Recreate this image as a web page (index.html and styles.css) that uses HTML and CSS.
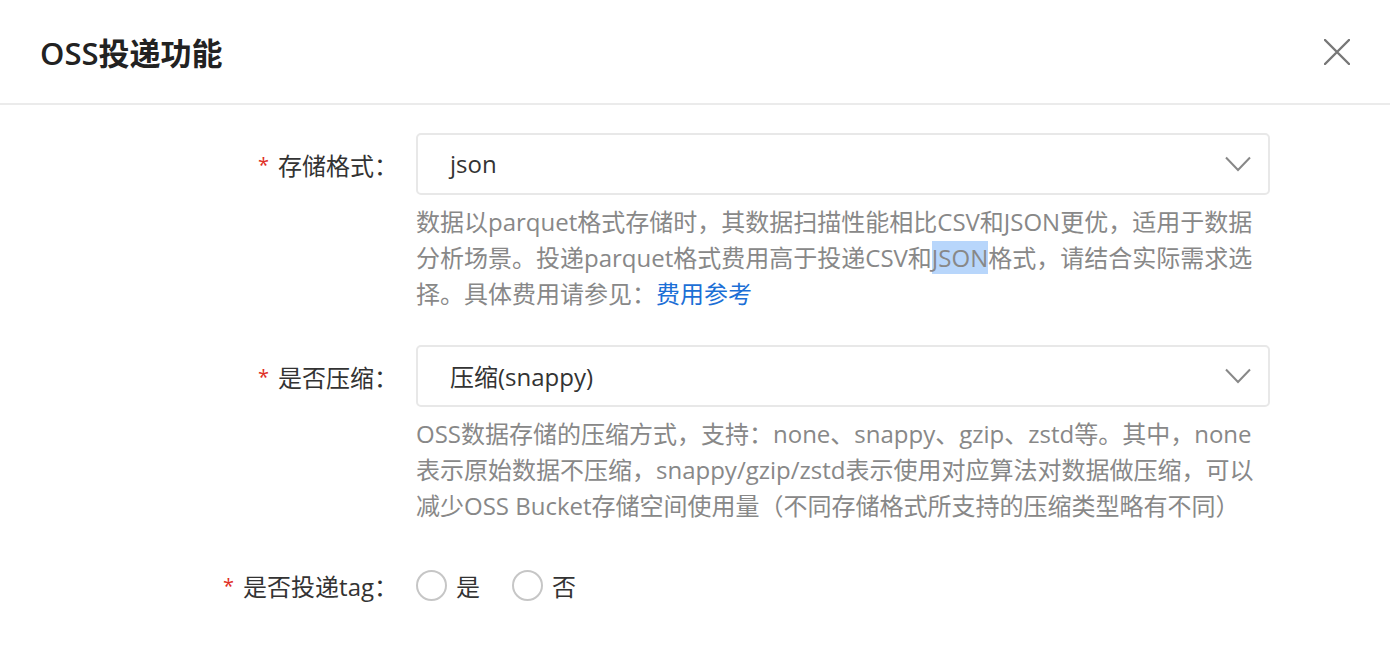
FILE: index.html
```html
<!DOCTYPE html>
<html lang="zh-CN">
<head>
  <meta charset="UTF-8" />
  <title>OSS投递功能</title>
  <link rel="stylesheet" href="styles.css">
</head>
<body>
  <div class="dialog">
    <header class="dialogHeader">
      <h1>OSS投递功能</h1>
      <button class="closeBtn" aria-label="关闭">
        <svg width="26" height="26" viewBox="0 0 26 26">
          <path d="M1 1 L25 25 M25 1 L1 25" stroke="#777" stroke-width="2.4" stroke-linecap="round" fill="none" />
        </svg>
      </button>
    </header>

    <form class="form">
      <div class="formItem">
        <label class="formLabel"><span class="required">*</span>存储格式：</label>
        <div class="formControl">
          <div class="select">
            <span class="selectValue">json</span>
            <svg class="chevron" width="26" height="16" viewBox="0 0 26 16">
              <path d="M1 1.5 L13 14 L25 1.5" stroke="#888" stroke-width="2" fill="none" />
            </svg>
          </div>
          <p class="help">数据以parquet格式存储时，其数据扫描性能相比CSV和JSON更优，适用于数据分析场景。投递parquet格式费用高于投递CSV和<span class="picked">JSON</span>格式，请结合实际需求选择。具体费用请参见：<a href="#">费用参考</a></p>
        </div>
      </div>

      <div class="formItem">
        <label class="formLabel"><span class="required">*</span>是否压缩：</label>
        <div class="formControl">
          <div class="select">
            <span class="selectValue">压缩(snappy)</span>
            <svg class="chevron" width="26" height="16" viewBox="0 0 26 16">
              <path d="M1 1.5 L13 14 L25 1.5" stroke="#888" stroke-width="2" fill="none" />
            </svg>
          </div>
          <p class="help">OSS数据存储的压缩方式，支持：none、snappy、gzip、zstd等。其中，none表示原始数据不压缩，snappy/gzip/zstd表示使用对应算法对数据做压缩，可以减少OSS Bucket存储空间使用量（不同存储格式所支持的压缩类型略有不同）</p>
        </div>
      </div>

      <div class="formItem radioItem">
        <label class="formLabel"><span class="required">*</span>是否投递tag：</label>
        <div class="formControl radioGroup">
          <label class="radio"><span class="radioDot"></span>是</label>
          <label class="radio"><span class="radioDot"></span>否</label>
        </div>
      </div>
    </form>
  </div>
</body>
</html>
```

FILE: styles.css
```css
/* Dialog base */
body {
  margin: 0;
  background: #fff;
  color: #333;
  font-family: "Open Sans", "Noto Sans CJK SC", sans-serif;
}
.dialog {
  width: 1390px;
}
.dialogHeader {
  height: 105px;
  border-bottom: 2px solid #ebebeb;
  display: flex;
  align-items: center;
  justify-content: space-between;
  padding: 0 40px;
  box-sizing: border-box;
}
.dialogHeader h1 {
  margin: 0;
  font-size: 31px;
  font-weight: 600;
  color: #222;
}
.closeBtn {
  border: none;
  background: none;
  padding: 0;
  display: flex;
  cursor: pointer;
}

.form {
  padding: 28px 120px 0 0;
}
.formItem {
  display: grid;
  grid-template-columns: 398px 1fr;
  column-gap: 18px;
  margin-bottom: 33px;
}
.formLabel {
  height: 62px;
  display: flex;
  align-items: center;
  justify-content: flex-end;
  font-size: 24px;
  color: #333;
}
.radioItem .formLabel,
.radioItem .radioGroup {
  height: 56px;
}
.required {
  color: #e02e24;
  margin-right: 9px;
  font-size: 20px;
}

.select {
  height: 62px;
  border: 2px solid #e8e8e8;
  border-radius: 5px;
  box-sizing: border-box;
  display: flex;
  align-items: center;
  justify-content: space-between;
  padding: 0 17px 0 32px;
}
.selectValue {
  font-size: 24px;
  color: #333;
  margin-top: -2px;
}
.help {
  margin: 9px 0 0;
  font-size: 24px;
  line-height: 36px;
  color: #888;
}
.help a {
  color: #1c6fd6;
  text-decoration: none;
}
.picked {
  background: #b8d6fb;
}

.radioGroup {
  display: flex;
  align-items: center;
  gap: 32px;
  height: 62px;
}
.radio {
  display: flex;
  align-items: center;
  gap: 9px;
  font-size: 24px;
  color: #333;
}
.radioDot {
  width: 31px;
  height: 31px;
  border: 2px solid #c6c6c6;
  border-radius: 50%;
  box-sizing: border-box;
}
```
